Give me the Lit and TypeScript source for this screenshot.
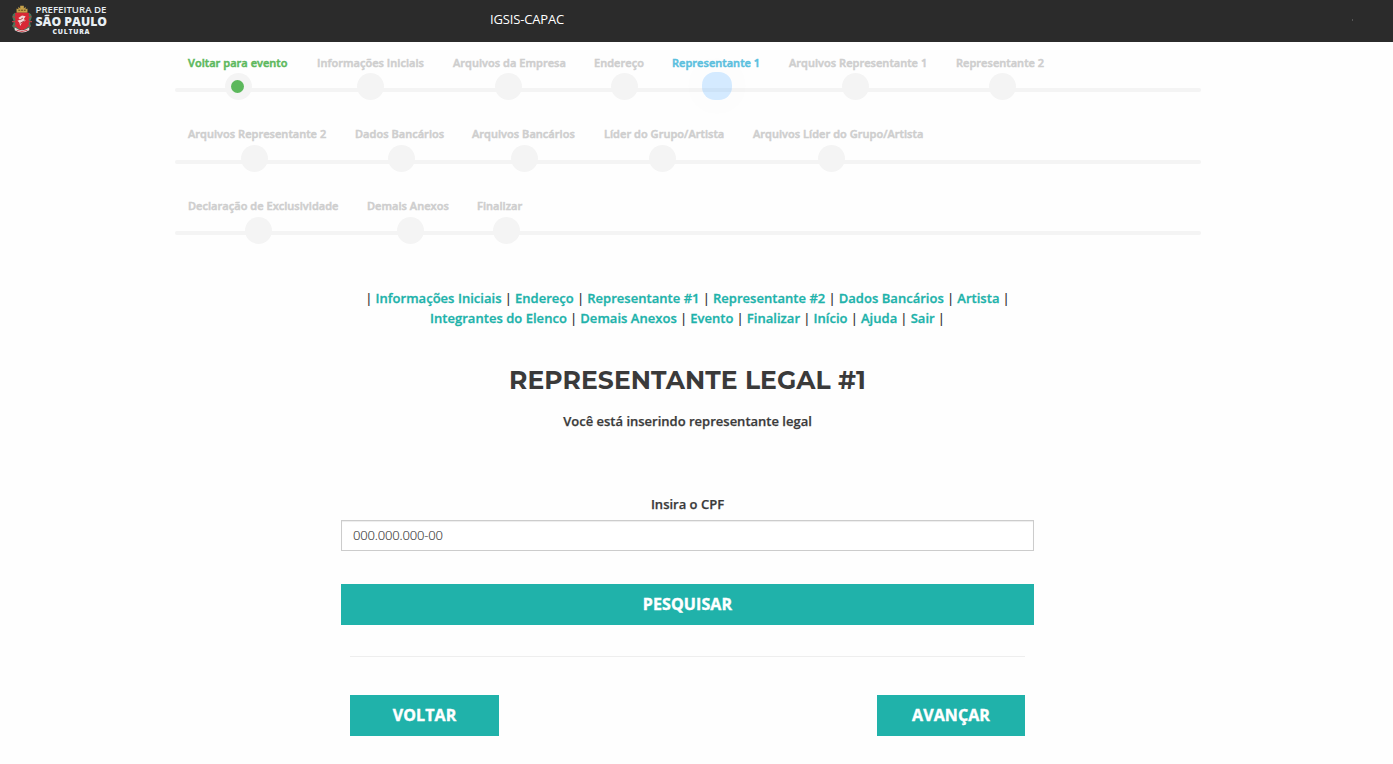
import { LitElement, html, css, svg } from "lit";
import { customElement, property } from "lit/decorators.js";
import { classMap } from "lit/directives/class-map.js";
import { styleMap } from "lit/directives/style-map.js";

/* width: space taken by the label; shift: offset of the dot from the label's centre */
type Step = { label: string; width: number; shift: number; state?: "done" | "active" };

const ROWS: Step[][] = [
  [
    { label: "Voltar para evento", width: 100, shift: 0, state: "done" },
    { label: "Informações Iniciais", width: 107, shift: 0 },
    { label: "Arquivos da Empresa", width: 112, shift: -1 },
    { label: "Endereço", width: 49, shift: 6 },
    { label: "Representante 1", width: 88, shift: 1, state: "active" },
    { label: "Arquivos Representante 1", width: 138, shift: -3 },
    { label: "Representante 2", width: 88, shift: 2 },
  ],
  [
    { label: "Arquivos Representante 2", width: 138, shift: -3 },
    { label: "Dados Bancários", width: 88, shift: 2 },
    { label: "Arquivos Bancários", width: 103, shift: 1 },
    { label: "Líder do Grupo/Artista", width: 120, shift: -2 },
    { label: "Arquivos Líder do Grupo/Artista", width: 170, shift: -7 },
  ],
  [
    { label: "Declaração de Exclusividade", width: 150, shift: -5 },
    { label: "Demais Anexos", width: 81, shift: 3 },
    { label: "Finalizar", width: 46, shift: 6 },
  ],
];

const LINKS: string[] = [
  "Informações Iniciais", "Endereço", "Representante #1", "Representante #2", "Dados Bancários", "Artista",
  "Integrantes do Elenco", "Demais Anexos", "Evento", "Finalizar", "Início", "Ajuda", "Sair",
];

@customElement("city-logo")
class CityLogo extends LitElement {
  static styles = css`
    :host { display: block; width: 98px; height: 36px; }
    svg { display: block; }
    text { font-family: "Open Sans", sans-serif; fill: #e8eff4; }
    .top { font-size: 8.6px; font-weight: 600; }
    .mid { font-size: 12.2px; font-weight: 800; }
    .low { font-size: 6.8px; font-weight: 800; }
  `;
  render() {
    return html`<svg width="98" height="36" viewBox="0 0 98 36">
      ${svg`<g transform="translate(0 2) scale(.91 .87)">
        <path d="M5 9V4l2 1V2l2 2V1h4v3l2-2v3l2-1v5z" fill="#c7a24a"/>
        <path d="M7 6h2M10 6h2M13 6h2" stroke="#614719" stroke-width="1.2"/>
        <path d="M3 9q-4 3-2 7t-1 8l4 5 4-1V11zM19 9q4 3 2 7t0 8l-4 5-4-1V11z" fill="#49795b"/>
        <path d="M1 13l3 2M0 19l4 0M2 25l3-2M21 13l-3 2M22 19h-4M20 25l-3-2" stroke="#b14444" stroke-width="1.5"/>
        <path d="M3.5 9h15v12q0 6-7.5 8-7.5-2-7.5-8z" fill="#d92735"/>
        <path d="M7 15l4-3 4 1-2 3 2 2-4 2-2 4-1-4-2-2 3-1z" fill="#f3d7d5"/>
        <path d="M9 17l3-2M9 21l5-3" stroke="#a52e38" stroke-width="1"/>
        <path d="M3 26q8 6 16 0v3q-8 5-16 0z" fill="#e7dddd"/>
        <path d="M5 29q6 3 12 0" fill="none" stroke="#cc3943" stroke-width="1"/>
      </g>`}
      <text class="top" x="23.5" y="10.2" textLength="71" lengthAdjust="spacingAndGlyphs">PREFEITURA DE</text>
      <text class="mid" x="23.5" y="22.6" textLength="71.5" lengthAdjust="spacingAndGlyphs">SÃO PAULO</text>
      <text class="low" x="40.5" y="31.4" textLength="37">CULTURA</text>
    </svg>`;
  }
}

@customElement("step-row")
class StepRow extends LitElement {
  @property({ attribute: false }) steps: Step[] = [];
  static styles = css`
    :host {
      display: flex;
      gap: 29px;
      box-sizing: border-box;
      height: 72px;
      padding: calc(13px - var(--lift, 0px)) 13px 0;
      position: relative;
    }
    :host::before {
      content: "";
      position: absolute;
      left: 0;
      right: 0;
      top: var(--bar-top, 46px);
      height: 4px;
      border-radius: 2px;
      background: #f4f4f4;
    }
    .step {
      display: flex;
      flex-direction: column;
      align-items: center;
      position: relative;
      color: #cecece;
      font-size: 11px;
      font-weight: 600;
      line-height: 15px;
      letter-spacing: 0.04px;
      white-space: nowrap;
      -webkit-text-stroke: 0.5px currentColor;
    }
    .name { align-self: flex-start; }
    .dot {
      box-sizing: border-box;
      width: 27px;
      height: 27px;
      margin-top: calc(3px + var(--lift, 0px));
      border-radius: 50%;
      background: #f4f4f4;
      display: grid;
      place-items: center;
    }
    .done { color: #5cb85c; }
    .done .dot::after {
      content: "";
      width: 13px;
      height: 13px;
      margin-right: 1px;
      border-radius: 50%;
      background: #5cb85c;
    }
    .active { color: #5bc0de; }
    .active .dot {
      width: 30px;
      height: 28px;
      margin-top: 2px;
      border-radius: 13px;
      background: linear-gradient(#d4eaff 16px, #cce2f7 16px 20px, #d4eaff 20px);
      box-shadow: 0 0 0 14px rgba(0, 0, 0, 0.005);
    }
  `;
  render() {
    return this.steps.map(
      (s) => html`<div
        class=${classMap({ step: true, done: s.state === "done", active: s.state === "active" })}
        style=${styleMap({ width: `${s.width}px` })}
      >
        <span class="name">${s.label}</span>
        <span class="dot" style=${styleMap({ transform: `translateX(${s.shift}px)` })}></span>
      </div>`
    );
  }
}

@customElement("app-root")
class AppRoot extends LitElement {
  static styles = css`
    :host {
      display: block;
      height: 764px;
      overflow: hidden;
      background: #fefefe;
      color: #3a3a3a;
      font: 13px/20px "Open Sans", sans-serif;
    }
    header {
      display: flex;
      height: 42px;
      background: #2b2b2b;
      color: #fff;
    }
    city-logo { margin: 3px 0 0 12px; }
    .brand { margin: 9px 0 0 380px; font-size: 13px; letter-spacing: -0.15px; }
    .mark { width: 1px; height: 2px; margin: 19px 40px 0 auto; background: #555; }
    .steps { width: 1026px; margin: 0 0 0 175px; }
    .steps step-row + step-row { --lift: 1px; }
    .steps step-row:last-child { --bar-top: 45px; }
    main { width: 693px; margin-left: 341px; text-align: center; }
    nav { padding: 30px 20px 0; font-weight: 600; word-spacing: -0.25px; }
    a {
      color: #20b2aa;
      text-decoration: none;
      white-space: nowrap;
      letter-spacing: 0.03px;
      word-spacing: 0;
      -webkit-text-stroke: 0.3px currentColor;
    }
    h1 {
      margin: 35px 0 0;
      font: 700 25px/34px Montserrat, Inter, sans-serif;
      letter-spacing: 0.1px;
      white-space: nowrap;
    }
    .note, label { font-weight: 600; -webkit-text-stroke: 0.25px currentColor; }
    .note { margin: 14px 0 0; }
    label { display: block; margin-top: 63px; }
    input {
      display: block;
      box-sizing: border-box;
      width: 100%;
      height: 31px;
      margin-top: 6px;
      padding: 0 11px 1px;
      border: 1px solid #ccc;
      border-radius: 0;
      background: #fff;
      box-shadow: inset 0 1px 1px rgba(0, 0, 0, 0.075);
      font: 300 13px "Open Sans", sans-serif;
      letter-spacing: -0.16px;
      -webkit-text-stroke: 0.15px currentColor;
      color: #3a3a3a;
    }
    button {
      height: 41px;
      padding: 0;
      border: 0;
      background: #20b2aa;
      color: #fff;
      font: 700 16px/41px "Open Sans", sans-serif;
      letter-spacing: 0.1px;
      -webkit-text-stroke: 0.4px currentColor;
    }
    .search { display: block; width: 100%; margin-top: 33px; }
    hr { height: 1px; margin: 31px 9px 0; border: 0; background: #eee; }
    .actions { display: flex; justify-content: space-between; margin: 38px 9px 0; }
    .back { width: 149px; }
    .next { width: 148px; }
  `;
  render() {
    return html`
      <header>
        <city-logo></city-logo>
        <span class="brand">IGSIS-CAPAC</span>
        <span class="mark"></span>
      </header>
      <section class="steps">${ROWS.map((r) => html`<step-row .steps=${r}></step-row>`)}</section>
      <main>
        <nav>| ${LINKS.map((t) => html`<a>${t}</a> | `)}</nav>
        <h1>REPRESENTANTE LEGAL #1</h1>
        <p class="note">Você está inserindo representante legal</p>
        <label>Insira o CPF</label>
        <input type="text" value="000.000.000-00" />
        <button class="search">PESQUISAR</button>
        <hr />
        <div class="actions">
          <button class="back">VOLTAR</button>
          <button class="next">AVANÇAR</button>
        </div>
      </main>
    `;
  }
}
